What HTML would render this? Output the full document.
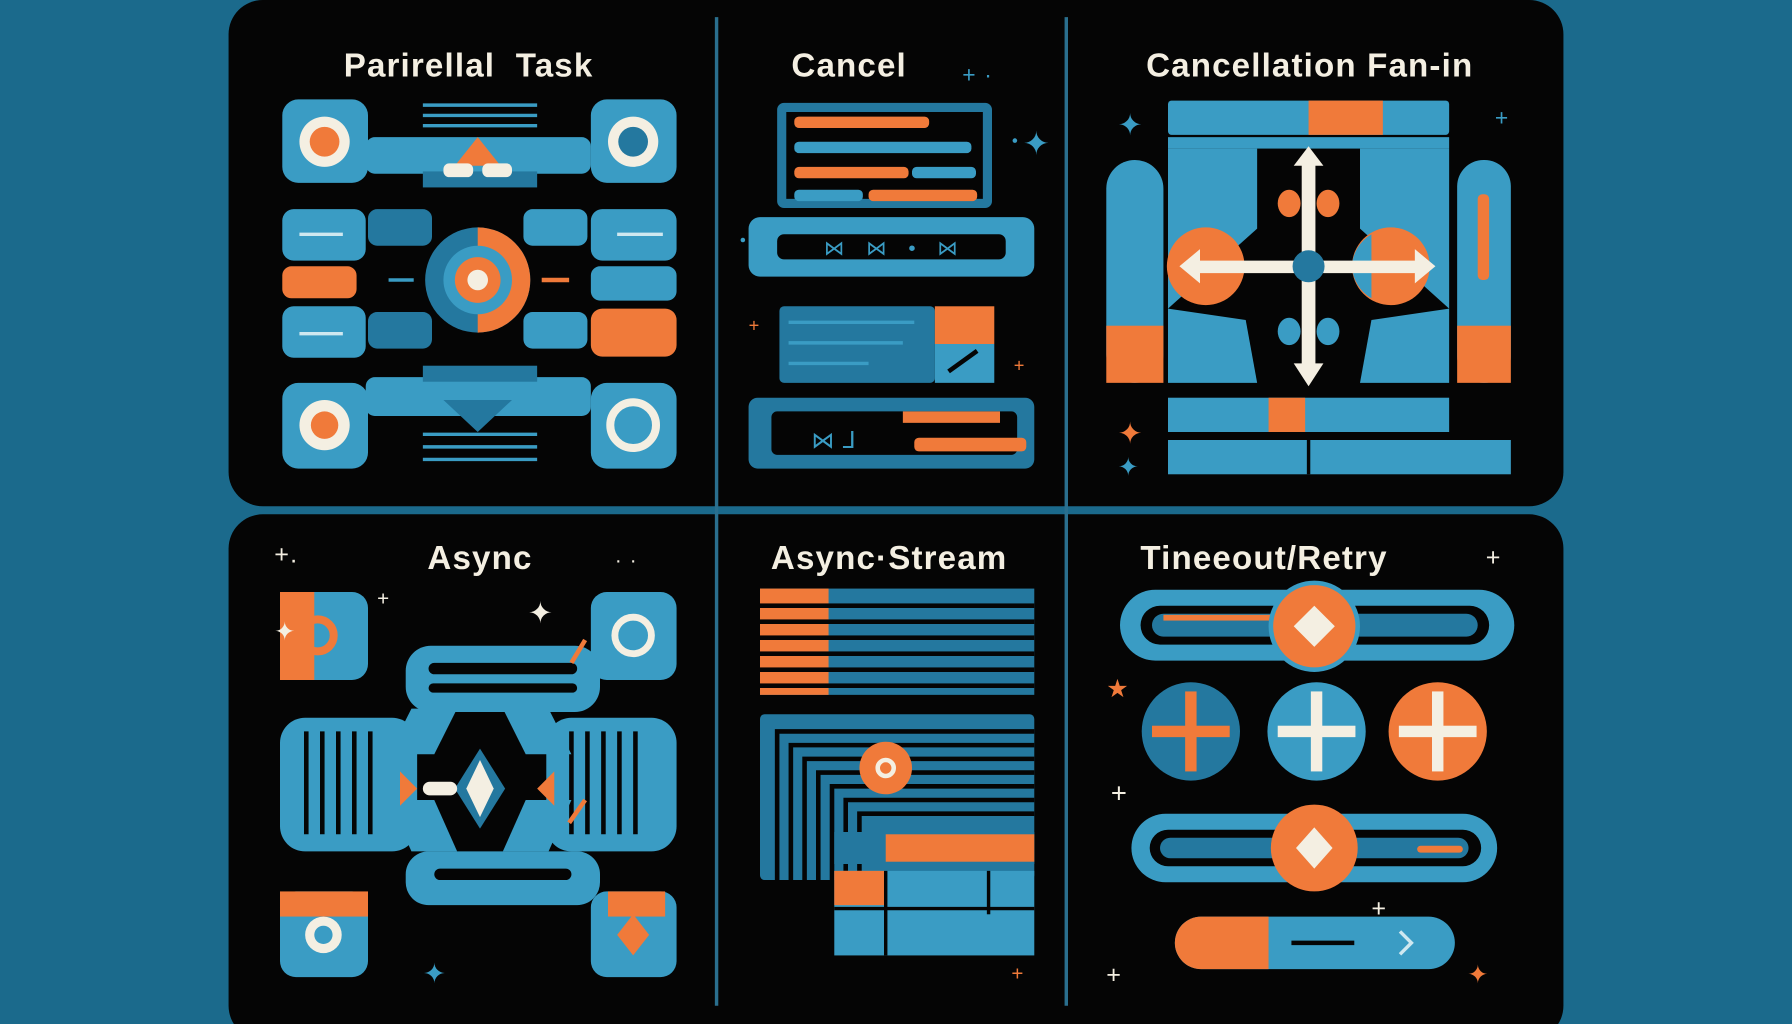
<!DOCTYPE html>
<html><head><meta charset="utf-8"><style>
html,body{margin:0;padding:0;background:#1b6a8c;width:1792px;height:1024px;overflow:hidden}
svg{display:block}
text{font-family:"Liberation Sans",sans-serif;fill:#f4efe2;font-size:30px;letter-spacing:1px}
.t{font-weight:bold;font-size:29px}
</style></head><body>
<svg width="1792" height="1024" viewBox="0 0 1568 896" xmlns="http://www.w3.org/2000/svg">
<defs>
<style>.b{fill:#3a9cc4}.d{fill:#24789f}.o{fill:#f07a3a}.c{fill:#f4efe2}.k{fill:#050505}.l{stroke:#3a9cc4;stroke-width:3}.lw{stroke:#cfe8f0;stroke-width:3}.lo{stroke:#f07a3a;stroke-width:4}</style>
</defs>
<rect width="1568" height="896" fill="#1b6a8c"/>
<rect x="200" y="0" width="1168" height="443" rx="30" fill="#050505"/>
<rect x="200" y="450" width="1168" height="460" rx="30" fill="#050505"/>
<line x1="627" y1="15" x2="627" y2="880" stroke="#2a6f8e" stroke-width="3"/>
<line x1="933" y1="15" x2="933" y2="880" stroke="#2a6f8e" stroke-width="3"/>

<text class="t" x="410" y="67" text-anchor="middle">Parirellal&#160;&#160;Task</text>
<text class="t" x="743" y="67" text-anchor="middle">Cancel</text>
<text class="t" x="1146" y="67" text-anchor="middle">Cancellation Fan-in</text>
<text class="t" x="420" y="498" text-anchor="middle">Async</text>
<text class="t" x="778" y="498" text-anchor="middle">Async·Stream</text>
<text class="t" x="1106" y="498" text-anchor="middle">Tineeout/Retry</text>

<!-- Panel 1 -->
<g>
<rect class="b" x="247" y="87" width="75" height="73" rx="14"/>
<circle cx="284" cy="124" r="22" class="c"/><circle cx="284" cy="124" r="13" class="o"/>
<rect class="b" x="517" y="87" width="75" height="73" rx="14"/>
<circle cx="554" cy="124" r="22" class="c"/><circle cx="554" cy="124" r="13" class="d"/>
<rect class="b" x="320" y="120" width="197" height="32" rx="8"/>
<rect class="d" x="370" y="150" width="100" height="14"/>
<polygon class="o" points="398,145 418,120 438,145"/>
<rect class="c" x="388" y="143" width="26" height="12" rx="5"/><rect class="c" x="422" y="143" width="26" height="12" rx="5"/>
<line class="l" x1="370" y1="92" x2="470" y2="92"/><line class="l" x1="370" y1="101" x2="470" y2="101"/><line class="l" x1="370" y1="110" x2="470" y2="110"/>
<rect class="b" x="247" y="183" width="73" height="45" rx="10"/>
<rect class="o" x="247" y="233" width="65" height="28" rx="8"/>
<rect class="b" x="247" y="268" width="73" height="45" rx="10"/>
<rect class="d" x="322" y="183" width="56" height="32" rx="8"/>
<rect class="d" x="322" y="273" width="56" height="32" rx="8"/>
<rect class="b" x="458" y="183" width="56" height="32" rx="8"/>
<rect class="b" x="458" y="273" width="56" height="32" rx="8"/>
<rect class="b" x="517" y="183" width="75" height="45" rx="10"/>
<rect class="b" x="517" y="233" width="75" height="30" rx="8"/>
<rect class="o" x="517" y="270" width="75" height="42" rx="10"/>
<circle cx="418" cy="245" r="46" class="d"/>
<path d="M418 199 A46 46 0 0 1 418 291 Z" class="o"/>
<circle cx="418" cy="245" r="30" class="b"/>
<circle cx="418" cy="245" r="20" class="o"/><circle cx="418" cy="245" r="9" class="c"/>
<line class="lw" x1="262" y1="205" x2="300" y2="205"/><line class="lw" x1="262" y1="292" x2="300" y2="292"/>
<line class="lw" x1="540" y1="205" x2="580" y2="205"/>
<line x1="340" y1="245" x2="362" y2="245" class="l"/><line x1="474" y1="245" x2="498" y2="245" class="lo"/>
<rect class="b" x="247" y="335" width="75" height="75" rx="14"/>
<circle cx="284" cy="372" r="22" class="c"/><circle cx="284" cy="372" r="12" class="o"/>
<rect class="b" x="517" y="335" width="75" height="75" rx="14"/>
<circle cx="554" cy="372" r="20" fill="none" stroke="#f4efe2" stroke-width="7"/>
<rect class="b" x="320" y="330" width="197" height="34" rx="8"/>
<rect class="d" x="370" y="320" width="100" height="14"/>
<polygon class="d" points="388,350 448,350 418,378"/>
<line class="l" x1="370" y1="380" x2="470" y2="380"/><line class="l" x1="370" y1="391" x2="470" y2="391"/><line class="l" x1="370" y1="402" x2="470" y2="402"/>
</g>

<!-- Panel 2 -->
<g>
<rect class="d" x="680" y="90" width="188" height="92" rx="6"/>
<rect class="k" x="688" y="98" width="172" height="76"/>
<rect class="o" x="695" y="102" width="118" height="10" rx="4"/>
<rect class="b" x="695" y="124" width="155" height="10" rx="4"/>
<rect class="o" x="695" y="146" width="100" height="10" rx="4"/><rect class="b" x="798" y="146" width="56" height="10" rx="4"/>
<rect class="b" x="695" y="166" width="60" height="10" rx="4"/><rect class="o" x="760" y="166" width="95" height="10" rx="4"/>
<rect class="b" x="655" y="190" width="250" height="52" rx="10"/>
<rect class="k" x="680" y="205" width="200" height="22" rx="6"/>
<text x="780" y="223" text-anchor="middle" style="font-size:18px;fill:#3a9cc4">⋈&#160;&#160;&#160;⋈&#160;&#160;&#160;•&#160;&#160;&#160;⋈</text>
<rect class="d" x="682" y="268" width="136" height="67" rx="4"/>
<line class="l" x1="690" y1="282" x2="800" y2="282"/><line class="l" x1="690" y1="300" x2="790" y2="300"/><line class="l" x1="690" y1="318" x2="760" y2="318"/>
<rect class="o" x="818" y="268" width="52" height="33"/>
<rect class="b" x="818" y="301" width="52" height="34"/>
<line x1="830" y1="325" x2="855" y2="307" stroke="#050505" stroke-width="4"/>
<rect class="d" x="655" y="348" width="250" height="62" rx="8"/>
<rect class="k" x="675" y="360" width="215" height="38" rx="5"/>
<rect class="o" x="790" y="360" width="85" height="10"/>
<rect class="o" x="800" y="383" width="98" height="12" rx="4"/>
<text x="710" y="392" style="font-size:20px;fill:#3a9cc4">⋈ ⅃</text>
<circle cx="650" cy="210" r="2" class="b"/><circle cx="888" cy="123" r="2" class="b"/>
<text x="842" y="72" style="font-size:20px;fill:#3a9cc4">+ ·</text>
<text x="895" y="135" style="font-size:28px;fill:#3a9cc4">✦</text>
<text x="655" y="290" style="font-size:16px;fill:#f07a3a">+</text>
<text x="887" y="325" style="font-size:16px;fill:#f07a3a">+</text>
</g>

<!-- Panel 3 -->
<g>
<rect class="b" x="1022" y="88" width="246" height="30" rx="3"/>
<rect class="o" x="1145" y="88" width="65" height="30"/>
<rect class="b" x="1022" y="120" width="246" height="10"/>
<polygon class="b" points="1022,130 1100,130 1100,200 1022,270"/>
<polygon class="b" points="1190,130 1268,130 1268,270 1190,200"/>
<polygon class="b" points="1022,335 1022,270 1090,280 1100,335"/>
<polygon class="b" points="1268,335 1268,270 1200,280 1190,335"/>
<rect class="b" x="968" y="140" width="50" height="195" rx="25"/>
<rect class="o" x="968" y="285" width="50" height="50"/>
<rect class="b" x="1275" y="140" width="47" height="195" rx="23"/>
<rect class="o" x="1275" y="285" width="47" height="50"/>
<rect class="o" x="1293" y="170" width="10" height="75" rx="4"/>
<circle cx="1055" cy="233" r="34" class="o"/>
<circle cx="1217" cy="233" r="34" class="o"/>
<path d="M1183 233 A34 34 0 0 1 1200 205 L1200 261 A34 34 0 0 1 1183 233Z" class="b"/>
<ellipse cx="1128" cy="178" rx="10" ry="12" class="o"/><ellipse cx="1162" cy="178" rx="10" ry="12" class="o"/>
<ellipse cx="1128" cy="290" rx="10" ry="12" class="b"/><ellipse cx="1162" cy="290" rx="10" ry="12" class="b"/>
<rect class="c" x="1139" y="135" width="12" height="195" rx="5"/>
<polygon class="c" points="1132,145 1145,128 1158,145"/>
<polygon class="c" points="1132,318 1145,338 1158,318"/>
<rect class="c" x="1040" y="228" width="210" height="11" rx="5"/>
<polygon class="c" points="1050,218 1032,233 1050,248"/>
<polygon class="c" points="1238,218 1256,233 1238,248"/>
<circle cx="1145" cy="233" r="14" class="d"/>
<rect class="b" x="1022" y="348" width="246" height="30"/>
<rect class="o" x="1110" y="348" width="32" height="30"/>
<rect class="b" x="1022" y="385" width="300" height="30"/>
<line x1="1145" y1="385" x2="1145" y2="415" stroke="#050505" stroke-width="3"/>
<text x="978" y="388" style="font-size:26px;fill:#f07a3a">✦</text>
<text x="978" y="416" style="font-size:22px;fill:#3a9cc4">✦</text>
<text x="978" y="118" style="font-size:26px;fill:#3a9cc4">✦</text>
<text x="1308" y="110" style="font-size:20px;fill:#3a9cc4">+</text>
</g>

<!-- Panel 4 -->
<g>
<rect class="b" x="245" y="518" width="77" height="77" rx="14"/>
<rect class="o" x="245" y="518" width="30" height="77"/>
<circle cx="278" cy="556" r="14" fill="none" stroke="#f07a3a" stroke-width="7"/>
<rect class="b" x="517" y="518" width="75" height="77" rx="14"/>
<circle cx="554" cy="556" r="16" fill="none" stroke="#f4efe2" stroke-width="6"/>
<rect class="b" x="355" y="565" width="170" height="58" rx="22"/>
<rect class="k" x="375" y="580" width="130" height="10" rx="5"/>
<rect class="k" x="375" y="598" width="130" height="8" rx="4"/>
<rect class="b" x="245" y="628" width="120" height="117" rx="22"/>
<rect class="b" x="478" y="628" width="114" height="117" rx="22"/>
<g stroke="#050505" stroke-width="4" fill="none">
<path d="M268 640 v90 M282 640 v90 M296 640 v90 M310 640 v90 M324 640 v90"/>
<path d="M500 640 v90 M514 640 v90 M528 640 v90 M542 640 v90 M556 640 v90"/>
</g>
<polygon class="b" points="360,620 400,620 380,660 340,660"/>
<polygon class="b" points="480,620 440,620 460,660 500,660"/>
<polygon class="b" points="360,745 400,745 380,700 340,700"/>
<polygon class="b" points="480,745 440,745 460,700 500,700"/>
<rect class="b" x="355" y="745" width="170" height="47" rx="20"/>
<rect class="k" x="380" y="760" width="120" height="10" rx="5"/>
<polygon class="d" points="420,655 442,690 420,725 398,690"/>
<polygon class="c" points="420,665 432,690 420,715 408,690"/>
<rect class="c" x="370" y="684" width="30" height="12" rx="6"/>
<polygon class="o" points="350,675 365,690 350,705"/>
<polygon class="o" points="485,675 470,690 485,705"/>
<rect class="b" x="245" y="780" width="77" height="75" rx="14"/>
<rect class="o" x="245" y="780" width="77" height="22"/>
<circle cx="283" cy="818" r="16" class="c"/><circle cx="283" cy="818" r="8" class="b"/>
<rect class="b" x="517" y="780" width="75" height="75" rx="14"/>
<rect class="o" x="532" y="780" width="50" height="22"/>
<polygon class="o" points="554,800 568,818 554,836 540,818"/>
<line class="lo" x1="498" y1="720" x2="512" y2="700" /><line class="lo" x1="500" y1="580" x2="512" y2="560"/>
<text x="240" y="560" style="font-size:22px;fill:#f4efe2">✦</text>
<text x="462" y="545" style="font-size:26px;fill:#f4efe2">✦</text>
<text x="370" y="860" style="font-size:24px;fill:#3a9cc4">✦</text>
<text x="240" y="492" style="font-size:22px;fill:#f4efe2">+.</text>
<text x="538" y="496" style="font-size:18px;fill:#f4efe2">· ·</text>
<text x="330" y="530" style="font-size:18px;fill:#f4efe2">+</text>
</g>

<!-- Panel 5 -->
<g>
<rect class="d" x="665" y="515" width="240" height="93"/>
<rect class="o" x="665" y="515" width="60" height="93"/>
<g fill="#050505"><rect x="665" y="528" width="240" height="4"/><rect x="665" y="542" width="240" height="4"/><rect x="665" y="556" width="240" height="4"/><rect x="665" y="570" width="240" height="4"/><rect x="665" y="584" width="240" height="4"/><rect x="665" y="598" width="240" height="4"/></g>
<rect class="d" x="665" y="625" width="240" height="145" rx="4"/>
<g fill="none" stroke="#050505" stroke-width="4">
<path d="M680 770 V640 H905 M692 770 V652 H905 M704 770 V664 H905 M716 770 V676 H905 M728 770 V688 H905 M740 770 V700 H905 M752 770 V712 H905"/>
</g>
<circle cx="775" cy="672" r="23" class="o"/><circle cx="775" cy="672" r="7" fill="none" stroke="#f4efe2" stroke-width="4"/>
<rect class="d" x="730" y="728" width="175" height="28"/>
<rect class="o" x="775" y="730" width="130" height="24"/>
<rect class="b" x="730" y="762" width="175" height="74"/>
<rect class="o" x="730" y="762" width="45" height="30"/>
<line x1="775" y1="762" x2="775" y2="836" stroke="#050505" stroke-width="3"/>
<line x1="730" y1="795" x2="905" y2="795" stroke="#050505" stroke-width="3"/>
<line x1="865" y1="762" x2="865" y2="800" stroke="#050505" stroke-width="3"/>
<text x="885" y="858" style="font-size:18px;fill:#f07a3a">+</text>
</g>

<!-- Panel 6 -->
<g>
<rect class="b" x="980" y="516" width="345" height="62" rx="31"/>
<rect class="k" x="998" y="530" width="305" height="34" rx="17"/>
<rect class="d" x="1008" y="537" width="285" height="20" rx="10"/>
<rect class="o" x="1018" y="538" width="110" height="5"/>
<circle cx="1150" cy="548" r="38" class="o"/><circle cx="1150" cy="548" r="38" fill="none" stroke="#3a9cc4" stroke-width="4"/>
<polygon class="c" points="1150,530 1168,548 1150,566 1132,548"/>
<circle cx="1042" cy="640" r="43" class="d"/>
<rect class="o" x="1008" y="635" width="68" height="10"/><rect class="o" x="1037" y="605" width="10" height="70"/>
<circle cx="1152" cy="640" r="43" class="b"/>
<rect class="c" x="1118" y="635" width="68" height="10"/><rect class="c" x="1147" y="605" width="10" height="70"/>
<circle cx="1258" cy="640" r="43" class="o"/>
<rect class="c" x="1224" y="635" width="68" height="10"/><rect class="c" x="1253" y="605" width="10" height="70"/>
<rect class="b" x="990" y="712" width="320" height="60" rx="30"/>
<rect class="k" x="1006" y="726" width="290" height="32" rx="16"/>
<rect class="d" x="1015" y="733" width="270" height="18" rx="9"/>
<rect class="o" x="1240" y="740" width="40" height="6" rx="3"/>
<circle cx="1150" cy="742" r="38" class="o"/>
<polygon class="c" points="1150,724 1166,742 1150,760 1134,742"/>
<rect class="b" x="1028" y="802" width="245" height="46" rx="23"/>
<path d="M1051 802 H1110 V848 H1051 A23 23 0 0 1 1051 802Z" class="o"/>
<line x1="1130" y1="825" x2="1185" y2="825" stroke="#050505" stroke-width="4"/>
<path d="M1225 815 L1235 825 L1225 835" fill="none" stroke="#cfe8f0" stroke-width="3"/>
<text x="972" y="702" style="font-size:24px;fill:#f4efe2">+</text>
<text x="1200" y="802" style="font-size:22px;fill:#f4efe2">+</text>
<text x="1284" y="860" style="font-size:22px;fill:#f07a3a">✦</text>
<text x="1300" y="495" style="font-size:22px;fill:#f4efe2">+</text>
<text x="968" y="610" style="font-size:22px;fill:#f07a3a">★</text>
<text x="968" y="860" style="font-size:22px;fill:#f4efe2">+</text>
</g>
</svg>
</body></html>
